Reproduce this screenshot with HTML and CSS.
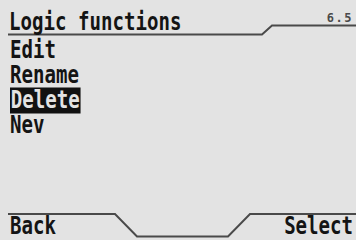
FILE: index.html
```html
<!DOCTYPE html>
<html>
	<head>
		<title>Logic functions</title>
		<meta charset="UTF-8"/>
		<link rel="stylesheet" href="styles.css">
	</head>
	<body>
		<div class="screen">
			<div class="header">
				<svg class="rule" width="356" height="37" viewBox="0 0 356 37">
					<polyline points="8,34.5 262,34.5 272,25.5 356,25.5" />
				</svg>
				<span class="title lcd">Logic functions</span>
				<span class="version">6.5</span>
			</div>
			<ul class="menu">
				<li><span class="lcd">Edit</span></li>
				<li><span class="lcd">Rename</span></li>
				<li><span class="lcd selected">Delete</span></li>
				<li><span class="lcd">Nev</span></li>
			</ul>
			<div class="footer">
				<svg class="rule" width="356" height="27" viewBox="0 0 356 27">
					<polyline points="8,1 115,1 137,23.5 228,23.5 250,1 356,1" />
				</svg>
				<span class="softkey lcd">Back</span>
				<span class="softkey lcd right">Select</span>
			</div>
		</div>
	</body>
</html>
```
FILE: styles.css
```css
html, body {
	margin: 0;
	height: 100%;
	background-color: #e3e3e3;
}

.screen {
	height: 240px;
	display: flex;
	flex-direction: column;
	color: #141414;
	font-family: "DejaVu Sans Mono", monospace;
	font-weight: bold;
	font-size: 23px;
	line-height: 25px;
}

/* narrow, tall LCD letters */
.lcd {
	display: inline-block;
	transform: scale(0.83, 1.04);
	transform-origin: left center;
	white-space: nowrap;
}

.rule {
	position: absolute;
	left: 0;
	top: 0;
}

.rule polyline {
	fill: none;
	stroke: #4a4a4a;
	stroke-width: 2;
}

.header {
	position: relative;
	height: 37px;
	display: flex;
	justify-content: space-between;
	align-items: flex-start;
}

.title {
	margin: 10px 0 0 9px;
}

.version {
	margin: 12px 3px 0 0;
	font-size: 12px;
	line-height: 12px;
	letter-spacing: 1.5px;
	color: #4a4a4a;
}

.menu {
	flex: 1;
	list-style: none;
	margin: 0;
	padding: 1px 0 0 10px;
}

.selected {
	background-color: #111;
	color: #e3e3e3;
	padding: 0 1px;
}

.footer {
	position: relative;
	height: 27px;
	display: flex;
	justify-content: space-between;
	align-items: flex-end;
}

.softkey {
	margin: 0 0 1px 10px;
}

.right {
	margin: 0 3px 1px 0;
	transform-origin: right center;
}
```
